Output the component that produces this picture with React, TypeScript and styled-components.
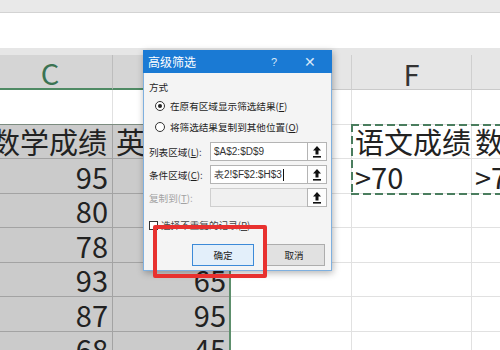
import React from "react";
import styled, { createGlobalStyle } from "styled-components";

const Global = createGlobalStyle`
  html, body { margin: 0; padding: 0; background: #fff; }
  body { width: 500px; height: 350px; overflow: hidden; font-family: "Noto Sans CJK SC", "Liberation Sans", sans-serif; }
  * { box-sizing: border-box; }
`;

const Page = styled.div`
  position: relative;
  width: 500px;
  height: 350px;
  overflow: hidden;
  display: flex;
  flex-direction: column;
`;

const TopBar = styled.div`
  flex: 0 0 13px;
  background: #e9e9e9;
  border-bottom: 1px solid #d3d3d3;
`;

const FormulaBar = styled.div`
  flex: 0 0 35px;
  background: #fff;
`;

const Band = styled.div`
  flex: 0 0 7px;
  background: #e6e6e6;
`;

const Sheet = styled.div`
  display: grid;
  margin-left: -12px;
  grid-template-columns: 125px 118px 121px 120px 120px;
  grid-template-rows: 35px repeat(8, 34.5px);
  width: 604px;
  flex-shrink: 0;
`;

const ColHead = styled.div<{ $sel?: boolean; $c: number }>`
  grid-row: 1;
  grid-column: ${(p) => p.$c};
  display: flex;
  align-items: flex-end;
  justify-content: center;
  padding-bottom: 1px;
  background: ${(p) => (p.$sel ? "#d5d5d5" : "#e6e6e6")};
  border-right: 1px solid ${(p) => (p.$sel ? "#bdbdbd" : "#cfcfcf")};
  border-bottom: ${(p) => (p.$sel ? "2px solid #4f8a64" : "1px solid #cacaca")};
  color: ${(p) => (p.$sel ? "#3b7352" : "#333")};
  font-size: 29px;
  line-height: 30px;
`;

const Cell = styled.div<{ $sel?: boolean; $num?: boolean; $r: number; $c: number }>`
  grid-row: ${(p) => p.$r};
  grid-column: ${(p) => p.$c};
  display: flex;
  align-items: flex-end;
  justify-content: ${(p) => (p.$num ? "flex-end" : "flex-start")};
  padding: 0 ${(p) => (p.$num ? "4px" : "0")} 2px ${(p) => (p.$num ? "0" : "3px")};
  overflow: hidden;
  white-space: nowrap;
  background: ${(p) => (p.$sel ? "#cbcbcb" : "#fff")};
  border-right: 1px solid ${(p) => (p.$sel ? "#a3a3a3" : "#e1e1e1")};
  border-bottom: 1px solid ${(p) => (p.$sel ? "#a3a3a3" : "#e1e1e1")};
  color: #222;
  font-size: 29px;
  line-height: 30px;
`;

const RangeFrame = styled.div`
  grid-column: 1 / 3;
  grid-row: 3 / 10;
  border-top: 1px solid #7c8c80;
  border-right: 2px solid #5d8f6c;
  margin-top: -1px;
  pointer-events: none;
  z-index: 1;
`;

const Marquee = styled.div`
  grid-column: 4 / 6;
  grid-row: 3 / 5;
  margin: -1px 0 -1px -1px;
  pointer-events: none;
  z-index: 1;
  background:
    linear-gradient(90deg, #4a7d5e 65%, transparent 0) top left / 12px 2px repeat-x,
    linear-gradient(90deg, #4a7d5e 65%, transparent 0) bottom left / 12px 2px repeat-x,
    linear-gradient(180deg, #4a7d5e 65%, transparent 0) top left / 2px 12px repeat-y;
`;

/* dialog */
const Dialog = styled.div`
  position: absolute;
  left: 143px;
  top: 50px;
  width: 189px;
  height: 221px;
  background: #f4f4f4;
  border: 1px solid #7fb0df;
  box-shadow: 1px 2px 7px rgba(0, 0, 0, 0.3);
  display: flex;
  flex-direction: column;
  font-size: 9.6px;
  color: #1e1e1e;
  z-index: 5;
`;

const TitleBar = styled.div`
  flex: 0 0 23px;
  margin: -1px -1px 0;
  background: #1a7ad4;
  color: #fff;
  display: flex;
  align-items: center;
  padding: 0 0 0 5px;
  font-size: 12px;
`;

const TitleText = styled.span`
  flex: 1;
`;

const TitleBtn = styled.span<{ $w: number }>`
  width: ${(p) => p.$w}px;
  text-align: center;
  color: #d8e8f8;
  font-size: ${(p) => (p.$w > 30 ? 14 : 11)}px;
  font-family: "Liberation Sans", sans-serif;
`;

const Body = styled.div`
  flex: 1;
  display: flex;
  flex-direction: column;
  padding: 7px 4px 0 5px;
`;

const Line = styled.div`
  height: 14px;
  line-height: 14px;
  white-space: nowrap;
`;

const RadioList = styled.div`
  margin-top: 1px;
  padding-left: 6px;
  display: flex;
  flex-direction: column;
`;

const RadioRow = styled.div`
  height: 21px;
  display: flex;
  align-items: center;
  gap: 5px;
  white-space: nowrap;
`;

const Radio = styled.span<{ $on?: boolean }>`
  width: 10px;
  height: 10px;
  border-radius: 50%;
  border: 1px solid #333;
  background: #fff;
  display: flex;
  align-items: center;
  justify-content: center;
  &::after {
    content: "";
    width: 4px;
    height: 4px;
    border-radius: 50%;
    background: ${(p) => (p.$on ? "#222" : "transparent")};
  }
`;

const Fields = styled.div`
  margin-top: 5px;
  display: flex;
  flex-direction: column;
  gap: 4px;
`;

const FieldRow = styled.div`
  display: flex;
  height: 19px;
  align-items: center;
`;

const FieldLabel = styled.span<{ $off?: boolean }>`
  width: 61px;
  white-space: nowrap;
  color: ${(p) => (p.$off ? "#a2a2a2" : "#1e1e1e")};
`;

const Input = styled.div<{ $off?: boolean }>`
  width: 97px;
  height: 19px;
  border: 1px solid ${(p) => (p.$off ? "#cfcfcf" : "#b4b4b4")};
  border-right: none;
  background: ${(p) => (p.$off ? "#f0f0f0" : "#fff")};
  padding-left: 3px;
  display: flex;
  align-items: center;
  font-size: 10px;
  font-family: "Liberation Sans", sans-serif;
  color: #333;
  white-space: nowrap;
`;

const Caret = styled.span`
  width: 1px;
  height: 12px;
  background: #111;
  margin-left: 1px;
`;

const PickBtn = styled.div`
  width: 20px;
  height: 19px;
  border: 1px solid #b4b4b4;
  background: #fdfdfd;
  display: flex;
  align-items: center;
  justify-content: center;
`;

const CheckRow = styled.div`
  margin-top: 12px;
  height: 12px;
  display: flex;
  align-items: center;
  gap: 3px;
  white-space: nowrap;
  color: #444;
`;

const Check = styled.span`
  width: 9px;
  height: 9px;
  border: 1px solid #333;
  background: #fff;
`;

const ButtonRow = styled.div`
  margin-top: 13px;
  display: flex;
  justify-content: flex-end;
  gap: 9px;
  padding-right: 2px;
`;

const Button = styled.div<{ $primary?: boolean }>`
  width: 62px;
  height: 22px;
  display: flex;
  align-items: center;
  justify-content: center;
  border: 1px solid ${(p) => (p.$primary ? "#3c8ad8" : "#adadad")};
  background: ${(p) => (p.$primary ? "#e3effa" : "#e1e1e1")};
  font-size: 9.6px;
  color: #222;
`;

const RedBox = styled.div`
  position: absolute;
  left: 153px;
  top: 225px;
  width: 114px;
  height: 53px;
  border: 4px solid #e8312f;
  border-radius: 2px;
  z-index: 6;
`;

const PickIcon = () => (
  <svg width="8" height="12" viewBox="0 0 8 12">
    <path d="M4 0 L8 4.5 H5.5 V8.5 H2.5 V4.5 H0 Z" fill="#111" />
    <rect x="0" y="10" width="8" height="1.6" fill="#111" />
  </svg>
);

const cols = ["C", "D", "E", "F", "G"];
const selCols = [true, true, false, false, false];
const rows: string[][] = [
  ["", "", "", "", ""],
  ["数学成绩", "英语成绩", "", "语文成绩", "数学成绩"],
  ["95", "76", "", ">70", ">70"],
  ["80", "88", "", "", ""],
  ["78", "90", "", "", ""],
  ["93", "65", "", "", ""],
  ["87", "95", "", "", ""],
  ["68", "45", "", "", ""],
];

export default function App() {
  return (
    <Page>
      <Global />
      <TopBar />
      <FormulaBar />
      <Band />
      <Sheet>
        {cols.map((c, i) => (
          <ColHead key={c} $c={i + 1} $sel={selCols[i]}>
            {c}
          </ColHead>
        ))}
        {rows.map((r, ri) =>
          r.map((v, ci) => (
            <Cell
              key={`${ri}-${ci}`}
              $r={ri + 2}
              $c={ci + 1}
              $sel={ri >= 1 && selCols[ci]}
              $num={/^\d+$/.test(v)}
            >
              {v}
            </Cell>
          ))
        )}
        <RangeFrame />
        <Marquee />
      </Sheet>

      <Dialog>
        <TitleBar>
          <TitleText>高级筛选</TitleText>
          <TitleBtn $w={28}>?</TitleBtn>
          <TitleBtn $w={44}>✕</TitleBtn>
        </TitleBar>
        <Body>
          <Line>方式</Line>
          <RadioList>
            <RadioRow>
              <Radio $on />
              <span>
                在原有区域显示筛选结果(<u>F</u>)
              </span>
            </RadioRow>
            <RadioRow>
              <Radio />
              <span>
                将筛选结果复制到其他位置(<u>O</u>)
              </span>
            </RadioRow>
          </RadioList>
          <Fields>
            <FieldRow>
              <FieldLabel>
                列表区域(<u>L</u>):
              </FieldLabel>
              <Input>$A$2:$D$9</Input>
              <PickBtn>
                <PickIcon />
              </PickBtn>
            </FieldRow>
            <FieldRow>
              <FieldLabel>
                条件区域(<u>C</u>):
              </FieldLabel>
              <Input>
                表2!$F$2:$H$3
                <Caret />
              </Input>
              <PickBtn>
                <PickIcon />
              </PickBtn>
            </FieldRow>
            <FieldRow>
              <FieldLabel $off>
                复制到(<u>T</u>):
              </FieldLabel>
              <Input $off />
              <PickBtn>
                <PickIcon />
              </PickBtn>
            </FieldRow>
          </Fields>
          <CheckRow>
            <Check />
            <span>
              选择不重复的记录(<u>R</u>)
            </span>
          </CheckRow>
          <ButtonRow>
            <Button $primary>确定</Button>
            <Button>取消</Button>
          </ButtonRow>
        </Body>
      </Dialog>
      <RedBox />
    </Page>
  );
}
